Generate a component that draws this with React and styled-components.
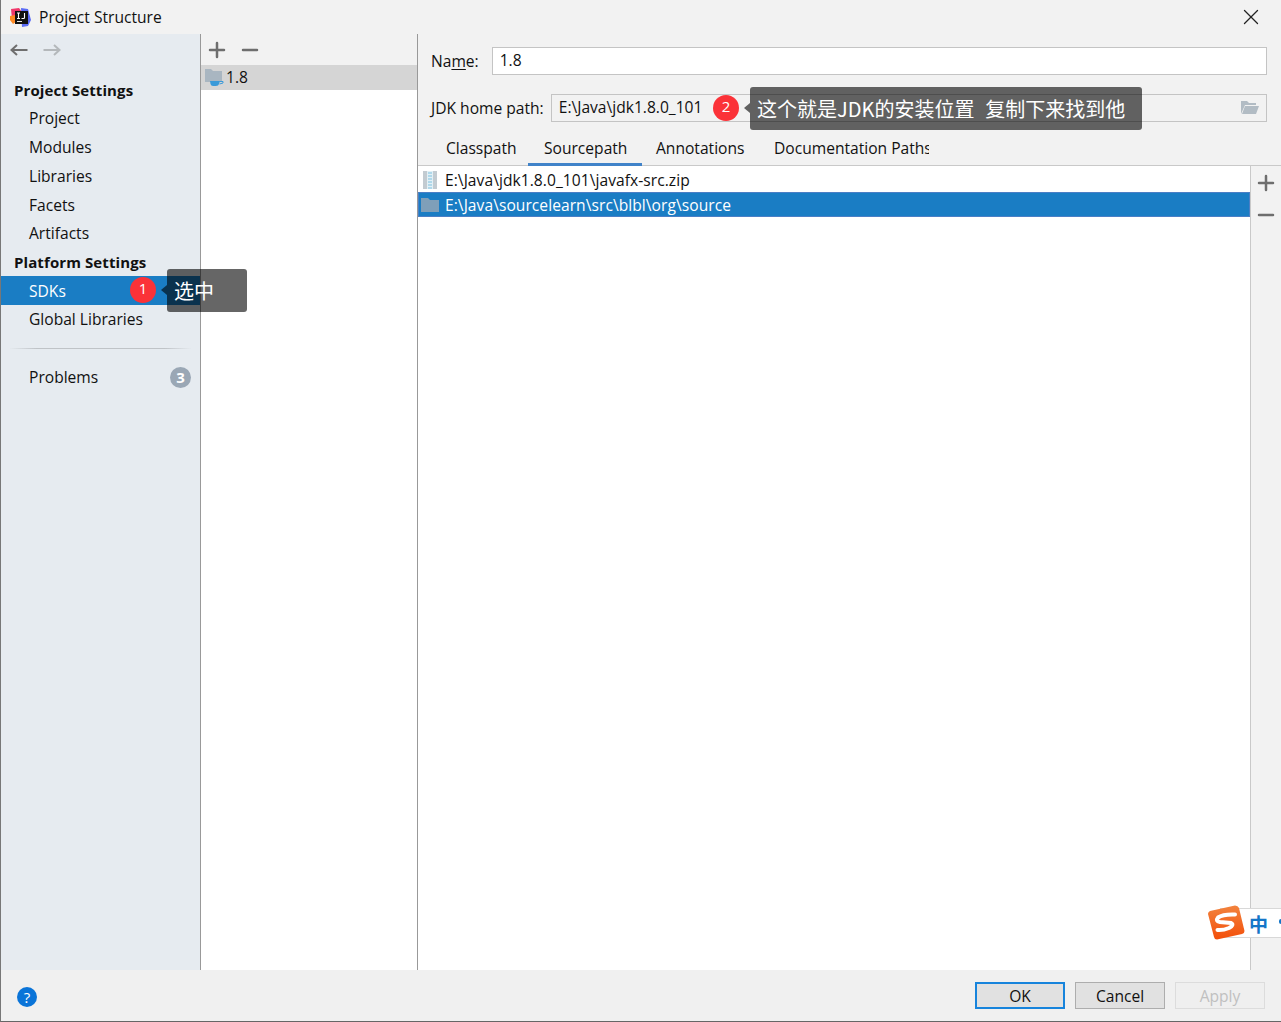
import React from 'react';
import styled, { createGlobalStyle } from 'styled-components';
import { Plus, Minus, X } from 'lucide-react';

const FONT = '"Open Sans", "Noto Sans", "Noto Sans CJK SC", sans-serif';
const TEXT_SIZE = '15.6px';

const GlobalStyle = createGlobalStyle`
  html, body {
    margin: 0;
    padding: 0;
    background: #ffffff;
  }
  body {
    font-family: ${FONT};
    font-size: ${TEXT_SIZE};
    color: #111;
  }
`;

const Window = styled.div`
  position: relative;
  width: 1281px;
  height: 1022px;
  box-sizing: border-box;
  border-left: 1px solid #777;
  border-bottom: 1px solid #666;
  display: flex;
  flex-direction: column;
  overflow: hidden;
`;

const TitleBar = styled.div`
  height: 34px;
  flex: none;
  background: #f2f2f2;
  display: flex;
  align-items: center;
  padding-left: 8px;
  gap: 8px;
`;

const CloseButton = styled.div`
  margin-left: auto;
  margin-right: 17px;
  display: flex;
`;

const Body = styled.div`
  flex: 1;
  display: flex;
  min-height: 0;
`;

const Sidebar = styled.div`
  width: 199px;
  flex: none;
  background: #e6ebf0;
  border-right: 1px solid #999;
  display: flex;
  flex-direction: column;
`;

const NavButtons = styled.div`
  height: 32px;
  display: flex;
  align-items: center;
  gap: 15px;
  padding-left: 9px;
  margin-bottom: 11px;
`;

const SectionTitle = styled.div`
  height: 27px;
  line-height: 26px;
  flex: none;
  margin-top: ${(p) => p.$top || 0}px;
  padding-left: 13px;
  font-weight: 700;
  font-size: 15px;
  letter-spacing: 0.1px;
`;

const SideItem = styled.div`
  height: 28.75px;
  flex: none;
  padding-left: 28px;
  padding-right: 9px;
  display: flex;
  align-items: center;
  justify-content: space-between;
  background: ${(p) => (p.$selected ? '#1a7dc4' : 'transparent')};
  color: ${(p) => (p.$selected ? '#fff' : '#111')};
`;

const SideSeparator = styled.div`
  height: 1px;
  flex: none;
  background: linear-gradient(to right, transparent, #bfc3c7 15%, #bfc3c7 85%, transparent);
  margin: 14px 8px;
`;

const CountBadge = styled.div`
  width: 21px;
  height: 21px;
  border-radius: 50%;
  background: #9aa7b5;
  color: #fff;
  font-size: 15px;
  font-weight: 700;
  line-height: 21px;
  text-align: center;
`;

const MiddlePane = styled.div`
  width: 216px;
  flex: none;
  background: #fff;
  border-right: 1px solid #999;
  display: flex;
  flex-direction: column;
`;

const MiddleToolbar = styled.div`
  height: 31px;
  background: #f2f2f2;
  display: flex;
  align-items: center;
  gap: 9px;
  padding-left: 4px;
`;

const SdkRow = styled.div`
  height: 25px;
  background: #d5d5d5;
  display: flex;
  align-items: center;
  padding-left: 3px;
  padding-bottom: 1px;
  box-sizing: border-box;
  gap: 2px;
`;

const DetailPane = styled.div`
  flex: 1;
  min-width: 0;
  display: flex;
  flex-direction: column;
  background: #f2f2f2;
`;

const FieldRow = styled.div`
  display: flex;
  align-items: center;
  height: 28px;
  padding: 0 14px 0 13px;
  margin-top: ${(p) => p.$top}px;
  gap: ${(p) => p.$gap}px;
`;

const FieldLabel = styled.label`
  flex: none;
  white-space: nowrap;
  u {
    text-underline-offset: 2px;
  }
`;

const TextField = styled.div`
  flex: 1;
  height: 28px;
  box-sizing: border-box;
  border: 1px solid #c4c4c4;
  background: ${(p) => (p.$readonly ? '#f2f2f2' : '#fff')};
  display: flex;
  align-items: center;
  justify-content: space-between;
  padding: 0 6px 2px 7px;
`;

const Tabs = styled.div`
  display: flex;
  height: 30px;
  margin-top: 13px;
  padding-left: 13px;
  border-bottom: 1px solid #c9c9c9;
  flex: none;
`;

const Tab = styled.div`
  box-sizing: border-box;
  width: ${(p) => p.$w}px;
  height: 31px;
  padding-left: ${(p) => p.$pad}px;
  line-height: 27px;
  white-space: nowrap;
  overflow: hidden;
  border-bottom: ${(p) => (p.$active ? '3px solid #4083c9' : 'none')};
`;

const PathPanel = styled.div`
  flex: 1;
  min-height: 0;
  display: flex;
  background: #fff;
`;

const PathList = styled.div`
  flex: 1;
  min-width: 0;
  padding-top: 1px;
`;

const PathRow = styled.div`
  height: 25px;
  box-sizing: border-box;
  display: flex;
  align-items: center;
  gap: 6px;
  padding-left: 2px;
  letter-spacing: 0.05px;
  background: ${(p) => (p.$selected ? '#1a7dc4' : 'transparent')};
  color: ${(p) => (p.$selected ? '#fff' : '#111')};
  border: ${(p) => (p.$selected ? '1px solid #4a7fc6' : '1px solid transparent')};
`;

const SideTools = styled.div`
  width: 30px;
  flex: none;
  background: #f2f2f2;
  border-left: 1px solid #c9c9c9;
  display: flex;
  flex-direction: column;
  align-items: center;
  gap: 8px;
  padding-top: 5px;
`;

const Footer = styled.div`
  height: 51px;
  flex: none;
  background: #f0f0f0;
  display: flex;
  align-items: center;
  padding: 0 16px 0 16px;
  gap: 10px;
`;

const HelpButton = styled.div`
  width: 20px;
  height: 20px;
  border-radius: 50%;
  background: #0a74d8;
  color: #fff;
  font-size: 15px;
  line-height: 20px;
  text-align: center;
  margin-right: auto;
  margin-top: 3px;
`;

const DialogButton = styled.button`
  width: 90px;
  height: 27px;
  box-sizing: border-box;
  padding: 0;
  font-family: ${FONT};
  font-size: ${TEXT_SIZE};
  color: ${(p) => (p.$disabled ? '#c0c0c0' : '#111')};
  background: ${(p) => (p.$disabled ? '#efefef' : '#e1e1e1')};
  border: ${(p) => (p.$default ? '2px solid #1784dc' : p.$disabled ? '1px solid #dcdcdc' : '1px solid #adadad')};
`;

const Callout = styled.div`
  position: absolute;
  left: ${(p) => p.$x}px;
  top: ${(p) => p.$y}px;
  width: ${(p) => p.$w}px;
  height: 43px;
  box-sizing: border-box;
  padding-left: 7px;
  background: rgba(0, 0, 0, 0.6);
  border-radius: 3px;
  color: #fff;
  font-family: "Noto Sans CJK SC", sans-serif;
  font-size: 20px;
  line-height: 44px;
  white-space: pre;
  word-spacing: 1px;

  &::before {
    content: '';
    position: absolute;
    left: -6px;
    top: 16px;
    border-style: solid;
    border-width: 5px 6px 5px 0;
    border-color: transparent rgba(0, 0, 0, 0.6) transparent transparent;
  }
`;

const StepBadge = styled.div`
  position: absolute;
  left: ${(p) => p.$x}px;
  top: ${(p) => p.$y}px;
  width: 26px;
  height: 26px;
  border-radius: 50%;
  background: #fb3238;
  color: #fff;
  font-size: 15px;
  line-height: 22px;
  text-align: center;
`;

const ImeBar = styled.div`
  position: absolute;
  left: 1219px;
  top: 908px;
  width: 61px;
  height: 30px;
  background: #fff;
  border: 1px solid #d8d8d8;
  border-right: none;
  box-sizing: border-box;
  color: #1476c8;
  font-family: "Noto Sans CJK SC", sans-serif;
  font-weight: 700;
  font-size: 19px;
  line-height: 30px;
  padding-left: 28px;
  white-space: nowrap;
`;

const ImeDot = styled.div`
  position: absolute;
  left: 1278px;
  top: 919px;
  width: 4px;
  height: 5px;
  border-radius: 2px;
  background: #1476c8;
`;

const ImeLogo = styled.svg`
  position: absolute;
  left: 1206px;
  top: 905px;
`;

const NavArrow = ({ flip, color }) => (
  <svg width="18" height="12" viewBox="0 0 18 12" style={flip ? { transform: 'scaleX(-1)' } : undefined}>
    <path d="M1.5 6 H17.500 M7 1 L1.500 6 L7 11" fill="none" stroke={color} strokeWidth="2" />
  </svg>
);

const IdeaLogo = () => (
  <svg width="22" height="21" viewBox="0 0 22 21">
    <path d="M2 2 L10 1 L13 5 L8 13 L3 12 Z" fill="#f0386b" />
    <path d="M12 1 L19 2 L22 13 L19 19 L13 20 Z" fill="#5b6cf5" />
    <path d="M1 9 L6 8 L7 15 L4 17 L1 13 Z" fill="#ff8a24" />
    <rect x="6" y="4" width="13" height="13" fill="#111" />
    <rect x="8" y="14" width="5" height="1" fill="#e8e8e8" />
    <path d="M8 6 H11 M9.500 6 V11.500 M8 11.500 H11 M15.500 6 V10.500 Q15.500 11.500 14.500 11.500 H12.500" stroke="#fff" strokeWidth="1.1" fill="none" />
  </svg>
);

const SdkFolderIcon = () => (
  <svg width="20" height="20" viewBox="0 0 20 20">
    <path d="M1 2 H7 L9 4 H18 V15 H1 Z" fill="#a9b6c1" />
    <path d="M6 14 H16 L15 17 Q14.500 19 12 19 H9 Q7 19 6.500 17 Z" fill="#3a9ad9" />
    <path d="M16 14.500 H19 V16 L15.500 17" fill="none" stroke="#3a9ad9" strokeWidth="1" />
  </svg>
);

const ArchiveIcon = () => (
  <svg width="18" height="20" viewBox="0 0 18 20">
    <rect x="2" y="1" width="14" height="18" fill="#c3cbd1" />
    <rect x="6" y="1" width="6" height="18" fill="#e2f0f6" />
    <path d="M7 3 H11 M7 6 H11 M7 9 H11 M7 12 H11 M7 15 H11 M7 18 H11" stroke="#7fc0dd" strokeWidth="1.2" />
  </svg>
);

const FolderIcon = () => (
  <svg width="18" height="14" viewBox="0 0 18 14">
    <path d="M0 0 H7 L9 2 H18 V14 H0 Z" fill="#7f9fb9" />
  </svg>
);

const OpenFolderIcon = () => (
  <svg width="20" height="15" viewBox="0 0 20 15">
    <path d="M1 14 V1 H7 L9 3 H16 V5 H5 L1 14 Z" fill="#b2bcc4" />
    <path d="M5 6 H19 L16 14 H2 Z" fill="#b2bcc4" />
  </svg>
);

const SIDE_TOP = ['Project', 'Modules', 'Libraries', 'Facets', 'Artifacts'];

const App = () => (
  <Window>
    <GlobalStyle />
    <TitleBar>
      <IdeaLogo />
      <span>Project Structure</span>
      <CloseButton>
        <X size={26} strokeWidth={1.2} color="#222" />
      </CloseButton>
    </TitleBar>
    <Body>
      <Sidebar>
        <NavButtons>
          <NavArrow color="#6e6e6e" />
          <NavArrow flip color="#b4b8bb" />
        </NavButtons>
        <SectionTitle>Project Settings</SectionTitle>
        {SIDE_TOP.map((item) => (
          <SideItem key={item}>{item}</SideItem>
        ))}
        <SectionTitle $top={1.5}>Platform Settings</SectionTitle>
        <SideItem $selected>SDKs</SideItem>
        <SideItem>Global Libraries</SideItem>
        <SideSeparator />
        <SideItem>
          Problems
          <CountBadge>3</CountBadge>
        </SideItem>
      </Sidebar>
      <MiddlePane>
        <MiddleToolbar>
          <Plus size={24} strokeWidth={2.5} color="#6e6e6e" />
          <Minus size={24} strokeWidth={2.5} color="#6e6e6e" />
        </MiddleToolbar>
        <SdkRow>
          <SdkFolderIcon />
          1.8
        </SdkRow>
      </MiddlePane>
      <DetailPane>
        <FieldRow $top={13} $gap={13}>
          <FieldLabel>
            Na<u>m</u>e:
          </FieldLabel>
          <TextField>1.8</TextField>
        </FieldRow>
        <FieldRow $top={19} $gap={7}>
          <FieldLabel>JDK home path:</FieldLabel>
          <TextField $readonly>
            E:\Java\jdk1.8.0_101
            <OpenFolderIcon />
          </TextField>
        </FieldRow>
        <Tabs>
          <Tab $w={97} $pad={15}>Classpath</Tab>
          <Tab $w={114} $pad={16} $active>Sourcepath</Tab>
          <Tab $w={118} $pad={14}>Annotations</Tab>
          <Tab $w={169} $pad={14}>Documentation Paths</Tab>
        </Tabs>
        <PathPanel>
          <PathList>
            <PathRow>
              <ArchiveIcon />
              E:\Java\jdk1.8.0_101\javafx-src.zip
            </PathRow>
            <PathRow $selected>
              <FolderIcon />
              E:\Java\sourcelearn\src\blbl\org\source
            </PathRow>
          </PathList>
          <SideTools>
            <Plus size={24} strokeWidth={2.5} color="#6e6e6e" />
            <Minus size={24} strokeWidth={2.5} color="#6e6e6e" />
          </SideTools>
        </PathPanel>
      </DetailPane>
    </Body>
    <Footer>
      <HelpButton>?</HelpButton>
      <DialogButton $default>OK</DialogButton>
      <DialogButton>Cancel</DialogButton>
      <DialogButton $disabled>Apply</DialogButton>
    </Footer>

    <StepBadge $x={129} $y={277}>1</StepBadge>
    <Callout $x={166} $y={269} $w={80}>选中</Callout>
    <StepBadge $x={712} $y={95}>2</StepBadge>
    <Callout $x={749} $y={87} $w={392}>这个就是JDK的安装位置  复制下来找到他</Callout>

    <ImeBar>中</ImeBar>
    <ImeDot />
    <ImeLogo width="38" height="35" viewBox="0 0 38 35">
      <defs>
        <linearGradient id="imeGradient" x1="0" y1="0" x2="0" y2="1">
          <stop offset="0" stopColor="#f2833e" />
          <stop offset="1" stopColor="#f34f0a" />
        </linearGradient>
      </defs>
      <path d="M3 6 L28 0.500 Q31 0.500 32 3 L37.500 26 Q37.500 28.500 35 29 L10 34.500 Q7.500 34.500 7 32 L1 9 Q1 7 3 6 Z" fill="url(#imeGradient)" />
      <path d="M28 9.500 Q16 9 11 12.500 Q8 16 13 17 L24 18 Q27.500 20 22 23 Q16 25.500 10.500 25" fill="none" stroke="#fff" strokeWidth="4" strokeLinecap="round" />
    </ImeLogo>
  </Window>
);

export default App;
